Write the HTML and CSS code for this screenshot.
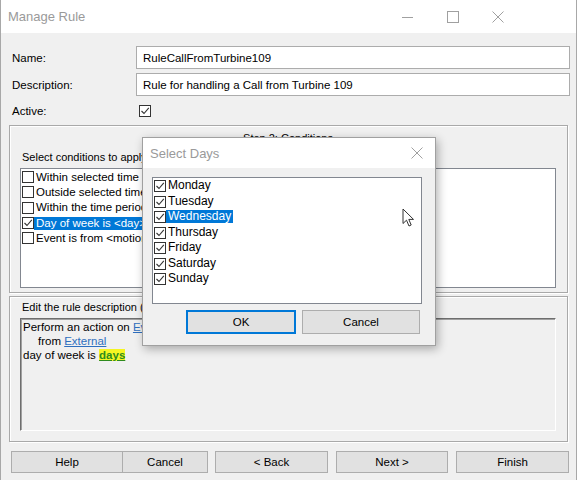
FILE: index.html
```html
<!DOCTYPE html>
<html>
<head>
<meta charset="utf-8">
<link rel="stylesheet" href="styles.css">
</head>
<body>
<div class="window">
  <div class="titlebar">
    <span class="title">Manage Rule</span>
    <div class="controls">
      <span class="ctl"><svg width="12" height="12" viewBox="0 0 12 12"><line x1="0" y1="6.5" x2="11" y2="6.5" stroke="#a0a0a0" stroke-width="1"/></svg></span>
      <span class="ctl"><svg width="12" height="12" viewBox="0 0 12 12"><rect x="0.5" y="0.5" width="11" height="11" fill="none" stroke="#a0a0a0" stroke-width="1"/></svg></span>
      <span class="ctl"><svg width="12" height="12" viewBox="0 0 12 12"><path d="M0.5 0.5 L11.5 11.5 M11.5 0.5 L0.5 11.5" stroke="#a0a0a0" stroke-width="1"/></svg></span>
    </div>
  </div>
  <div class="content">
    <div class="form">
      <div class="label">Name:</div>
      <div class="input">RuleCallFromTurbine109</div>
      <div class="label">Description:</div>
      <div class="input">Rule for handling a Call from Turbine 109</div>
      <div class="label">Active:</div>
      <div class="activecell"><span class="cb checked"></span></div>
    </div>

    <div class="group g1">
      <div class="group-title">Step 2: Conditions</div>
      <div class="hint">Select conditions to apply</div>
      <div class="listbox conds">
        <div class="row"><span class="cb"></span><span class="txt">Within selected time in</span></div>
        <div class="row"><span class="cb"></span><span class="txt">Outside selected time</span></div>
        <div class="row"><span class="cb"></span><span class="txt">Within the time period</span></div>
        <div class="row"><span class="cb checked"></span><span class="txt sel">Day of week is &lt;day&gt;</span></div>
        <div class="row"><span class="cb"></span><span class="txt">Event is from &lt;motion</span></div>
      </div>
    </div>

    <div class="group g2">
      <div class="hint">Edit the rule description (</div>
      <div class="desc">
        <div>Perform an action on <span class="link">Event</span></div>
        <div class="indent">from <span class="link">External</span></div>
        <div>day of week is <span class="days">days</span></div>
      </div>
    </div>

    <div class="buttons">
      <span class="btn help">Help</span>
      <span class="btn cancel">Cancel</span>
      <span class="btn back">&lt; Back</span>
      <span class="btn next">Next &gt;</span>
      <span class="btn finish">Finish</span>
    </div>
  </div>

  <div class="dialog">
    <div class="dtitlebar">
      <span class="dtitle">Select Days</span>
      <svg class="dclose" width="12" height="12" viewBox="0 0 12 12"><path d="M0.5 0.5 L11.5 11.5 M11.5 0.5 L0.5 11.5" stroke="#a0a0a0" stroke-width="1"/></svg>
    </div>
    <div class="dbody">
      <div class="listbox days-list">
        <div class="drow"><span class="cb checked"></span><span class="txt">Monday</span></div>
        <div class="drow"><span class="cb checked"></span><span class="txt">Tuesday</span></div>
        <div class="drow"><span class="cb checked"></span><span class="txt sel">Wednesday</span></div>
        <div class="drow"><span class="cb checked"></span><span class="txt">Thursday</span></div>
        <div class="drow"><span class="cb checked"></span><span class="txt">Friday</span></div>
        <div class="drow"><span class="cb checked"></span><span class="txt">Saturday</span></div>
        <div class="drow"><span class="cb checked"></span><span class="txt">Sunday</span></div>
      </div>
      <div class="dbuttons">
        <span class="btn ok">OK</span>
        <span class="btn dcancel">Cancel</span>
      </div>
    </div>
  </div>

  <svg class="cursor" width="13" height="20" viewBox="0 0 13 20"><path d="M1 1 L1 15.5 L4.5 12.2 L7 18 L9.2 17 L6.8 11.4 L11.5 11.4 Z" fill="#fff" stroke="#333" stroke-width="1" stroke-linejoin="miter"/></svg>
</div>
</body>
</html>
```

FILE: styles.css
```css
* { box-sizing: border-box; }
html, body { margin: 0; padding: 0; }
body {
  width: 579px;
  height: 480px;
  overflow: hidden;
  background: #fff;
  font-family: "Liberation Sans", Arial, sans-serif;
  font-size: 11px;
  color: #000;
}
.window {
  position: relative;
  width: 577px;
  height: 480px;
  background: #f0f0f0;
  border-left: 1px solid #a8a8a8;
  border-right: 1px solid #a8a8a8;
}
.titlebar {
  height: 33px;
  background: #fff;
  display: flex;
  align-items: center;
  padding-left: 7px;
}
.title {
  flex: 1;
  font-size: 13px;
  color: #9a9a9a;
}
.controls {
  display: flex;
  height: 100%;
  margin-right: 56px;
}
.ctl {
  width: 45px;
  display: flex;
  align-items: center;
  justify-content: center;
}
.content {
  padding: 13px 6px 0 8px;
}
.form {
  display: grid;
  grid-template-columns: 127px 434px;
  grid-template-rows: 23px 23px 21px;
  row-gap: 4px;
}
.label {
  padding-left: 3px;
  display: flex;
  align-items: center;
  font-size: 11.5px;
}
.input {
  background: #fff;
  border: 1px solid #acacac;
  padding: 0 6px;
  display: flex;
  align-items: center;
  font-size: 11.5px;
}
.activecell {
  display: flex;
  align-items: center;
  padding-left: 3px;
}
.cb {
  display: inline-block;
  width: 12px;
  height: 12px;
  border: 1px solid #333;
  background: #fff;
  flex: none;
}
.cb.checked {
  background-image: url("data:image/svg+xml;utf8,<svg xmlns='http://www.w3.org/2000/svg' width='10' height='10' viewBox='0 0 10 10'><path d='M1.5 5 L4 7.5 L8.8 1.8' fill='none' stroke='%23333' stroke-width='1.1'/></svg>");
  background-repeat: no-repeat;
  background-position: center;
}
.group {
  border: 1px solid #a9a9a9;
  box-shadow: inset 1px 1px 0 #fff, 1px 1px 0 #fff;
  margin-right: 2px;
}
.g1 {
  margin-top: 4px;
  height: 168px;
  padding: 5px 11px 4px 10px;
}
.group-title {
  height: 14px;
  line-height: 14px;
  text-align: center;
}
.hint {
  height: 14px;
  line-height: 14px;
  padding-left: 2px;
  white-space: nowrap;
  overflow: hidden;
}
.g1 .hint { margin-top: 5px; }
.listbox {
  background: #fff;
  border: 1px solid #828790;
}
.conds {
  margin-top: 4px;
  height: 120px;
  padding: 0 0 0 1px;
}
.row {
  height: 15.3px;
  display: flex;
  align-items: center;
  white-space: nowrap;
  font-size: 11.5px;
}
.conds .row:first-child { margin-top: 0.5px; }
.txt {
  padding: 0 2px;
  line-height: 13px;
}
.txt.sel {
  background: #0078d7;
  color: #fff;
}
.g2 {
  margin-top: 3px;
  height: 146px;
  padding: 3px 11px 11px 10px;
}
.desc {
  margin-top: 4px;
  height: 113px;
  border-top: 1px solid #6e6e6e;
  border-left: 1px solid #6e6e6e;
  border-right: 1px solid #fff;
  border-bottom: 1px solid #fff;
  box-shadow: inset 1px 1px 0 #a0a0a0;
  padding: 1px 0 0 2px;
  line-height: 14px;
  font-size: 11.5px;
  white-space: nowrap;
}
.indent { padding-left: 15px; }
.link {
  color: #2f6fbf;
  text-decoration: underline;
}
.days {
  color: #2e8b1e;
  font-weight: bold;
  text-decoration: underline;
  background: #f5f522;
}
.buttons {
  display: flex;
  margin-top: 9px;
  padding-left: 2px;
}
.btn {
  height: 22px;
  background: #e1e1e1;
  border: 1px solid #adadad;
  display: flex;
  align-items: center;
  justify-content: center;
  font-size: 11.5px;
}
.help { width: 112px; }
.cancel { width: 86px; margin-left: -1px; }
.back { width: 113px; margin-left: 7px; }
.next { width: 112px; margin-left: 8px; }
.finish { width: 113px; margin-left: 8px; }
.dialog {
  position: absolute;
  left: 141px;
  top: 137px;
  width: 294px;
  height: 209px;
  background: #f0f0f0;
  border: 1px solid #a0a0a0;
  box-shadow: 2px 3px 9px rgba(0, 0, 0, 0.3);
}
.dtitlebar {
  height: 30px;
  background: #fff;
  display: flex;
  align-items: center;
  justify-content: space-between;
  padding: 0 12px 0 7px;
}
.dtitle {
  font-size: 13px;
  color: #9a9a9a;
}
.dbody {
  padding: 9px 13px 0 9px;
}
.days-list {
  height: 127px;
  padding: 0 0 0 1px;
}
.drow {
  height: 15.5px;
  display: flex;
  align-items: center;
  white-space: nowrap;
  font-size: 12px;
}
.drow .cb { margin-top: 1px; }
.dbuttons {
  display: flex;
  margin-top: 6px;
  padding-left: 34px;
}
.ok {
  width: 110px;
  height: 24px;
  border: 2px solid #0078d7;
}
.dcancel {
  width: 118px;
  height: 24px;
  margin-left: 6px;
}
.cursor {
  position: absolute;
  left: 401px;
  top: 208px;
}
```
